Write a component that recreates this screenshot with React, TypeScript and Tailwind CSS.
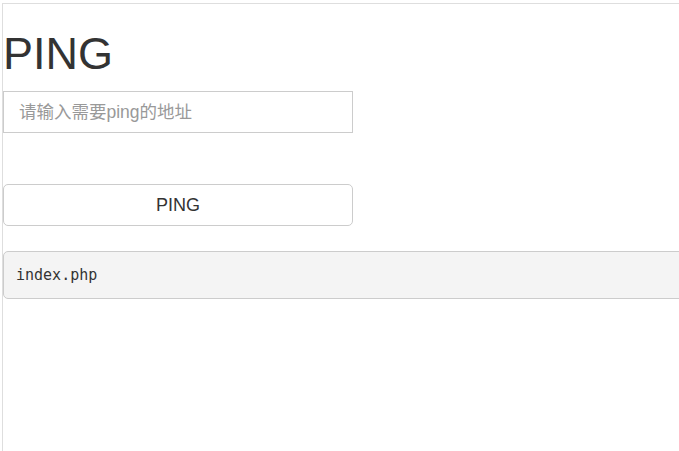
export default function App() {
  return (
    <div className="h-screen w-full overflow-hidden bg-white pl-[2px] pt-[3px]">
      {/* framed page area */}
      <div className="h-full border-l border-t border-[#dedede] font-['Liberation_Sans',Arial,sans-serif] text-[#333]">
        <h1 className="mt-[25px] mb-[12.5px] text-[45px] font-normal leading-[1.1]">PING</h1>

        <input
          type="text"
          placeholder="请输入需要ping的地址"
          className="block h-[42px] w-[350px] border border-[#ccc] bg-white px-[15px] font-['Liberation_Sans','Noto_Sans_CJK_SC',sans-serif] text-[17.5px] text-[#555] outline-none placeholder:text-[#999]"
        />

        <button
          type="button"
          className="mt-[51px] block h-[42px] w-[350px] rounded-[5px] border border-[#ccc] bg-white text-[18px] text-[#333]"
        >
          PING
        </button>

        <pre className="mt-[25px] w-[720px] rounded-[5px] border border-[#ccc] bg-[#f4f4f4] px-[12px] py-[11.5px] font-['DejaVu_Sans_Mono',monospace] text-[15px] leading-[23px] text-[#333]">
          index.php
        </pre>
      </div>
    </div>
  )
}
